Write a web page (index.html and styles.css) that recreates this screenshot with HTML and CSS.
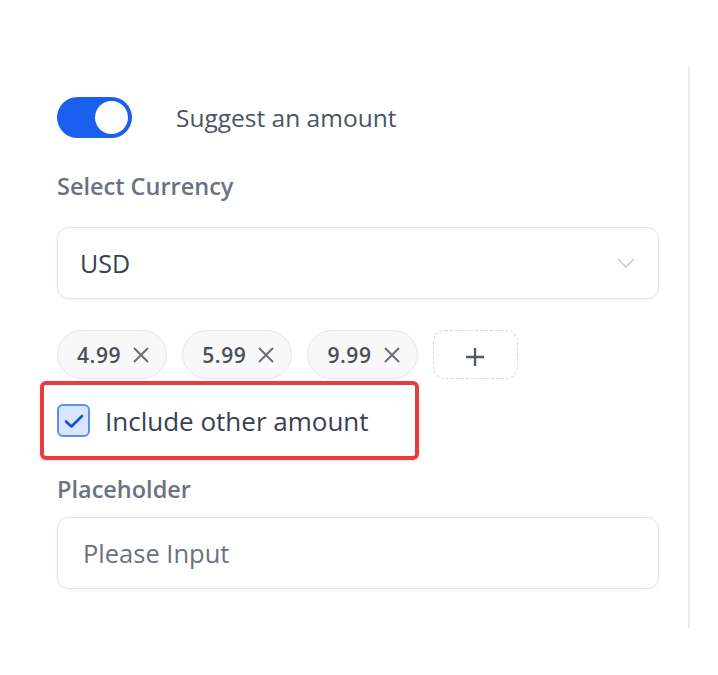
FILE: index.html
```html
<!DOCTYPE html>
<html>
<head>
<meta charset="utf-8">
<link rel="stylesheet" href="styles.css">
</head>
<body>
<div class="panel">
  <div class="toggle-row">
    <div class="toggle"><div class="knob"></div></div>
    <span class="toggle-label">Suggest an amount</span>
  </div>
  <div class="label label-currency">Select Currency</div>
  <div class="select">
    <span class="select-value">USD</span>
    <svg class="chevron" width="20" height="12" viewBox="0 0 20 12"><path d="M2 2 L10 10 L18 2" fill="none" stroke="#c9ccd2" stroke-width="1.6"/></svg>
  </div>
  <div class="chips">
    <div class="chip"><span>4.99</span><svg class="x" width="18" height="18" viewBox="0 0 18 18"><path d="M2 2 L16 16 M16 2 L2 16" stroke="#6b6f76" stroke-width="2"/></svg></div>
    <div class="chip"><span>5.99</span><svg class="x" width="18" height="18" viewBox="0 0 18 18"><path d="M2 2 L16 16 M16 2 L2 16" stroke="#6b6f76" stroke-width="2"/></svg></div>
    <div class="chip"><span>9.99</span><svg class="x" width="18" height="18" viewBox="0 0 18 18"><path d="M2 2 L16 16 M16 2 L2 16" stroke="#6b6f76" stroke-width="2"/></svg></div>
    <div class="add"><svg width="20" height="20" viewBox="0 0 20 20"><path d="M10 1 V19 M1 10 H19" stroke="#555a61" stroke-width="2.4"/></svg></div>
  </div>
  <div class="highlight">
    <div class="checkbox"><svg width="22" height="18" viewBox="0 0 22 18"><path d="M3 9.5 L8.5 14.5 L19 4" fill="none" stroke="#1d4ed8" stroke-width="2.6" stroke-linecap="round" stroke-linejoin="round"/></svg></div>
    <span class="check-label">Include other amount</span>
  </div>
  <div class="label label-placeholder">Placeholder</div>
  <div class="input">Please Input</div>
</div>
</body>
</html>
```
FILE: styles.css
```css
html, body {
  margin: 0;
  background: #ffffff;
}
body {
  font-family: "Open Sans", "Noto Sans", sans-serif;
  color: #374151;
}
.panel {
  margin-top: 67px;
  width: 690px;
  height: 561px;
  box-sizing: border-box;
  border-right: 2px solid #e9ebef;
  padding: 30px 29px 0 57px;
}
.toggle-row {
  display: flex;
  align-items: center;
  height: 41px;
}
.toggle {
  width: 75px;
  height: 41px;
  border-radius: 21px;
  background: #1a5ff0;
  display: flex;
  align-items: center;
  justify-content: flex-end;
  padding-right: 4px;
  box-sizing: border-box;
}
.knob {
  width: 33px;
  height: 33px;
  border-radius: 50%;
  background: #ffffff;
}
.toggle-label {
  margin-left: 44px;
  font-size: 24.5px;
  color: #4b5563;
}
.label {
  font-size: 23.5px;
  font-weight: 600;
  color: #6b7280;
  line-height: 30px;
}
.label-currency {
  margin-top: 33px;
}
.select {
  margin-top: 26px;
  height: 72px;
  box-sizing: border-box;
  border: 1.5px solid #e3e5ea;
  border-radius: 12px;
  box-shadow: 0 1px 3px rgba(0,0,0,0.06);
  display: flex;
  align-items: center;
  justify-content: space-between;
  padding: 0 22px 0 22px;
}
.select-value {
  font-size: 25px;
  color: #374151;
}
.chips {
  margin-top: 31px;
  display: flex;
  gap: 15px;
  height: 49px;
}
.chip {
  height: 49px;
  box-sizing: border-box;
  border: 1.5px solid #e5e7eb;
  background: #f8f8f9;
  border-radius: 25px;
  display: flex;
  align-items: center;
  gap: 11px;
  padding: 0 16px 0 19px;
  font-size: 21px;
  letter-spacing: 0.6px;
  font-weight: 600;
  color: #4b4f55;
}
.chip .x {
  width: 18px;
  height: 18px;
}
.add {
  width: 85px;
  height: 49px;
  box-sizing: border-box;
  border: 1.5px dashed #d3d6dc;
  border-radius: 12px;
  display: flex;
  align-items: center;
  justify-content: center;
  padding-top: 4px;
}
.highlight {
  margin-top: 2px;
  margin-left: -17px;
  width: 379px;
  height: 79px;
  box-sizing: border-box;
  border: 4px solid #e53e3e;
  border-radius: 6px;
  box-shadow: 0 1px 3px rgba(0,0,0,0.15);
  display: flex;
  align-items: center;
  padding-left: 13px;
}
.checkbox {
  width: 33px;
  height: 33px;
  box-sizing: border-box;
  border: 2px solid #5b8ff5;
  background: #d9e5fd;
  border-radius: 6px;
  display: flex;
  align-items: center;
  justify-content: center;
}
.check-label {
  margin-left: 15px;
  font-size: 26px;
  color: #374151;
}
.label-placeholder {
  margin-top: 14px;
}
.input {
  margin-top: 13px;
  height: 72px;
  box-sizing: border-box;
  border: 1.5px solid #e3e5ea;
  border-radius: 12px;
  box-shadow: 0 1px 3px rgba(0,0,0,0.06);
  display: flex;
  align-items: center;
  padding-left: 25px;
  font-size: 25.5px;
  color: #6b7280;
}
```
